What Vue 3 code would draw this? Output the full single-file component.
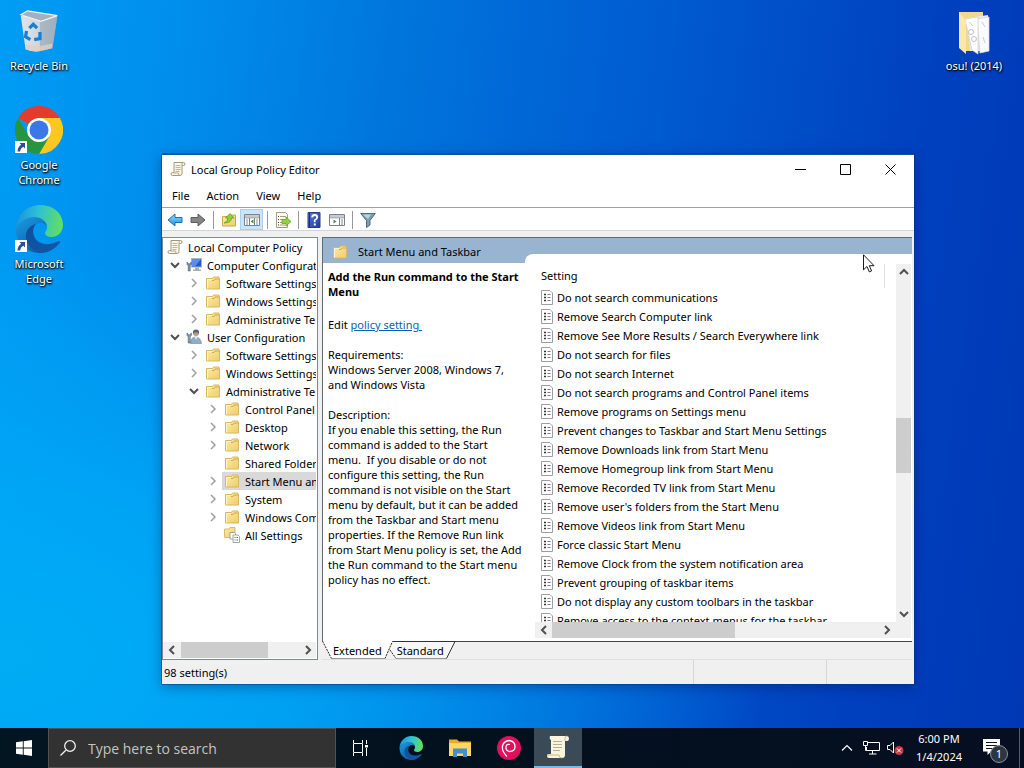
<script setup>
import { ref } from 'vue'

const menus = ['File', 'Action', 'View', 'Help']

const tree = [
  { level: 0, icon: 'scroll', text: 'Local Computer Policy' },
  { level: 1, icon: 'computer', text: 'Computer Configuration', open: true },
  { level: 2, icon: 'folder', text: 'Software Settings', closed: true },
  { level: 2, icon: 'folder', text: 'Windows Settings', closed: true },
  { level: 2, icon: 'folder', text: 'Administrative Templates', closed: true },
  { level: 1, icon: 'user', text: 'User Configuration', open: true },
  { level: 2, icon: 'folder', text: 'Software Settings', closed: true },
  { level: 2, icon: 'folder', text: 'Windows Settings', closed: true },
  { level: 2, icon: 'folder', text: 'Administrative Templates', open: true },
  { level: 3, icon: 'folder', text: 'Control Panel', closed: true },
  { level: 3, icon: 'folder', text: 'Desktop', closed: true },
  { level: 3, icon: 'folder', text: 'Network', closed: true },
  { level: 3, icon: 'folder', text: 'Shared Folders' },
  { level: 3, icon: 'folder', text: 'Start Menu and Taskbar', closed: true, selected: true },
  { level: 3, icon: 'folder', text: 'System', closed: true },
  { level: 3, icon: 'folder', text: 'Windows Components', closed: true },
  { level: 3, icon: 'all', text: 'All Settings' },
]

const description = [
  'If you enable this setting, the Run',
  'command is added to the Start',
  'menu.  If you disable or do not',
  'configure this setting, the Run',
  'command is not visible on the Start',
  'menu by default, but it can be added',
  'from the Taskbar and Start menu',
  'properties. If the Remove Run link',
  'from Start Menu policy is set, the Add',
  'the Run command to the Start menu',
  'policy has no effect.',
].join('\n')

const settings = [
  'Do not search communications',
  'Remove Search Computer link',
  'Remove See More Results / Search Everywhere link',
  'Do not search for files',
  'Do not search Internet',
  'Do not search programs and Control Panel items',
  'Remove programs on Settings menu',
  'Prevent changes to Taskbar and Start Menu Settings',
  'Remove Downloads link from Start Menu',
  'Remove Homegroup link from Start Menu',
  'Remove Recorded TV link from Start Menu',
  "Remove user's folders from the Start Menu",
  'Remove Videos link from Start Menu',
  'Force classic Start Menu',
  'Remove Clock from the system notification area',
  'Prevent grouping of taskbar items',
  'Do not display any custom toolbars in the taskbar',
  'Remove access to the context menus for the taskbar',
]

const query = ref('')
</script>

<template>
  <div class="screen">
    <svg class="defs" width="0" height="0" aria-hidden="true">
      <defs>
        <linearGradient id="gFolder" x1="0" y1="0" x2="1" y2="1">
          <stop offset="0" stop-color="#fdeba6" /><stop offset="1" stop-color="#efcd68" />
        </linearGradient>
        <linearGradient id="gBin" x1="0" y1="0" x2="1" y2="0">
          <stop offset="0" stop-color="#dfe5ea" /><stop offset=".55" stop-color="#ccd5dd" /><stop offset="1" stop-color="#9fb0be" />
        </linearGradient>
        <linearGradient id="gEdgeTop" x1="0" y1=".4" x2="1" y2=".5">
          <stop offset="0" stop-color="#1a93dc" /><stop offset=".45" stop-color="#2fc0d6" /><stop offset="1" stop-color="#62e05c" />
        </linearGradient>
        <linearGradient id="gEdgeMid" x1="0" y1="0" x2=".6" y2="1">
          <stop offset="0" stop-color="#1b9de2" /><stop offset="1" stop-color="#0c5cab" />
        </linearGradient>
        <linearGradient id="gEdgeLow" x1="0" y1="0" x2="1" y2="1">
          <stop offset="0" stop-color="#0e4f9c" /><stop offset="1" stop-color="#1457a6" />
        </linearGradient>
        <linearGradient id="gBlueArrow" x1="0" y1="0" x2="0" y2="1">
          <stop offset="0" stop-color="#8fdcff" /><stop offset="1" stop-color="#1c93dd" />
        </linearGradient>
        <linearGradient id="gHelp" x1="0" y1="0" x2="1" y2="1">
          <stop offset="0" stop-color="#5878d8" /><stop offset="1" stop-color="#22389c" />
        </linearGradient>

        <symbol id="i-folder" viewBox="0 0 16 16">
          <path d="M1.500 3.500h6l1-1.500h5.500v1.500h.5v10.500h-13z" fill="url(#gFolder)" stroke="#d8b662" />
          <path d="M7 5.500h2l1-1.500h4" fill="none" stroke="#cfa84e" />
          <path d="M2 4.500h5M2.500 5v8.500" stroke="#fff4c9" />
        </symbol>
        <symbol id="i-scroll" viewBox="0 0 16 16">
          <path d="M4 1.500h9.500q1.500 0 1.500 1.500t-1.500 1.500h-1.500v8q0 2-2 2h-7.500q-1.500 0-1.500-1.500t1.500-1.500h1.500z" fill="#fbf7e6" stroke="#a5977c" />
          <path d="M12 4.500v-1.500q0-1.500 1.500-1.500M10 14.500q-1.500 0-1.500-2.500h-5" fill="none" stroke="#b6a88a" />
          <path d="M5.500 4.500h5M5.500 6.500h5M5.500 8.500h5M5.500 10.500h4" stroke="#c0b69f" />
        </symbol>
        <symbol id="i-computer" viewBox="0 0 16 16">
          <rect x="5.500" y="1.500" width="10" height="8.500" fill="#2558cc" stroke="#a9b3c4" />
          <path d="M6 2h9l-6 7.500h-3z" fill="#5a8cf0" />
          <path d="M9 10.500h4v2h2v1.500h-8v-1.500h2z" fill="#a5adb8" />
          <path d="M1 5v2.500l1.200 1.200V14h2V8.700L5.400 7.500V5L4.200 6v1H2.200V6z" fill="#7e95a8" stroke="#4d6175" stroke-width=".6" />
        </symbol>
        <symbol id="i-user" viewBox="0 0 16 16">
          <circle cx="10" cy="4" r="3" fill="#b39a80" />
          <path d="M7 4.500q-.5-4 3-4t3 4q-3-2.500-6 0z" fill="#5a6470" />
          <path d="M4.500 14.500q0-6.500 5-6.500t6 6.500z" fill="#8fadc8" stroke="#6f8799" stroke-width=".6" />
          <path d="M8.500 8h3l-1.500 3z" fill="#e2eaf1" />
          <path d="M1 4v2.500l1.200 1.200V14h2V7.700L5.400 6.500V4L4.200 5v1H2.200V5z" fill="#8ba0b2" stroke="#4d6175" stroke-width=".6" />
        </symbol>
        <symbol id="i-all" viewBox="0 0 16 16">
          <path d="M.5 2h4.500l1-1.500h5v10h-10.500z" fill="url(#gFolder)" stroke="#d3ad55" stroke-width=".8" />
          <path d="M6 5.500h4.500l1 1V12H6z" fill="#fff" stroke="#8a8f98" stroke-width=".8" />
          <path d="M9 8h5l1.500 1.500V15.500H9z" fill="#fff" stroke="#8a8f98" stroke-width=".8" />
          <path d="M10.500 10.500h1M12.500 10.500h1.500M10.500 13h1M12.500 13h1.500" stroke="#666" />
        </symbol>
        <symbol id="i-setting" viewBox="0 0 12 15">
          <path d="M.5.5h8.500l2.500 2.500v11.500h-11z" fill="#fff" stroke="#9b9fa5" />
          <path d="M3 4.500h2M3 7.500h2M3 10.500h2" stroke="#333" stroke-width="1.500" />
          <path d="M6.500 4.500h3M6.500 7.500h3M6.500 10.500h3" stroke="#7a7a7a" />
        </symbol>
        <symbol id="i-edge" viewBox="0 0 48 48">
          <path d="M1 23C2 9 13 0 25 0c14 0 23 9 23 20 0 7-5 12-11 12-5 0-7-2-7-4 0-1.500 2-2 2-6 0-5-5-9-12-9C11 13 4 18 1 23z" fill="url(#gEdgeTop)" />
          <path d="M1 23c4-7 10-11 18-11 7 0 12 4 13 9-2-2-4-3-6-3-6 0-9 5-9 10 0 9 7 17 14 19-14 4-31-6-30-24z" fill="url(#gEdgeMid)" />
          <path d="M21 19c-3 3-4 9-1 14 4 7 14 8 24 3 1 0 1.500.5 1 1.500C40 44 33 48 26 48c-9-2-16-10-15-18 0-5 5-10 10-11z" fill="url(#gEdgeLow)" />
        </symbol>
        <symbol id="i-shortcut" viewBox="0 0 12 12">
          <path d="M0 0h12v12H0z" fill="#fff" />
          <path d="M4.500 2H10v5.500L8.300 5.800Q5.500 7 5 10.500H2.500Q2.700 6 6.200 3.800z" fill="#2b4f96" />
        </symbol>
        <symbol id="i-arrow" viewBox="0 0 16 14">
          <path d="M1 7L8 1v3.500h7v5H8V13z" stroke-linejoin="round" />
        </symbol>
      </defs>
    </svg>

    <main class="desktop">
      <nav class="shortcuts" aria-label="Desktop">
        <button class="shortcut" type="button">
          <svg class="big" viewBox="0 -1 50 50">
            <path d="M6 8l5 35q6 3 14 2l14-3 5-34z" fill="url(#gBin)" />
            <path d="M26 13l18-3-5 32-13 3z" fill="#9eafbd" opacity=".75" />
            <path d="M6 7l7-4 31 5-17 6z" fill="#a3b1bc" stroke="#eef3f6" stroke-width="1.200" />
            <path d="M11 38l14 2 14-3-1 5-13 3q-8 1-14-2z" fill="#e0d0c2" opacity=".8" />
            <path d="M15 21l4-4 4 4M12 24l-1 6 5 3M20 33l6-1v-7" fill="none" stroke="#1a7fcd" stroke-width="3.400" />
          </svg>
          <span>Recycle Bin</span>
        </button>
        <button class="shortcut" type="button">
          <svg class="big" viewBox="0 0 48 48">
            <path d="M24 24L3.200 12A24 24 0 0 1 44.800 12z" fill="#e33b2e" />
            <path d="M24 12H44.800A24 24 0 0 1 24 48L34.400 30z" fill="#fcc81f" />
            <path d="M13.600 30L3.200 12A24 24 0 0 0 24 48L34.400 30z" fill="#27953f" />
            <circle cx="24" cy="24" r="12" fill="#fff" /><circle cx="24" cy="24" r="9.500" fill="#3b78e7" />
            <use href="#i-shortcut" x="0" y="35" width="12" height="12" />
          </svg>
          <span>Google<br>Chrome</span>
        </button>
        <button class="shortcut" type="button">
          <svg class="big" viewBox="0 0 48 48">
            <use href="#i-edge" width="48" height="48" />
            <use href="#i-shortcut" x="0" y="35" width="12" height="12" />
          </svg>
          <span>Microsoft<br>Edge</span>
        </button>
      </nav>
      <nav class="shortcuts right" aria-label="Desktop folders">
        <button class="shortcut" type="button">
          <svg class="big" viewBox="0 0 48 48">
            <path d="M9 5h24v39H15l-6-4z" fill="#f2d88b" />
            <path d="M17 11l21-3v36H20z" fill="#e9eaec" />
            <path d="M27 12l12-2v34l-9 2z" fill="#fafafa" stroke="#d2d5d8" stroke-width=".8" />
            <path d="M15 12l13-2v37l-6-4z" fill="#fff" stroke="#cfd2d6" stroke-width=".8" />
            <circle cx="21" cy="25" r="2.500" fill="none" stroke="#bdc3c9" /><circle cx="24" cy="32" r="2.500" fill="none" stroke="#bdc3c9" />
            <path d="M19 15l4 4M32 15l3 5M33 30l2 6" stroke="#c9ced3" />
            <path d="M9 5l7 9v33l-7-6z" fill="#fbe7a6" />
          </svg>
          <span>osu! (2014)</span>
        </button>
      </nav>

      <section class="window" aria-label="Local Group Policy Editor">
        <header class="titlebar">
          <svg class="ic"><use href="#i-scroll" /></svg>
          <h1>Local Group Policy Editor</h1>
          <button type="button" aria-label="Minimize"><svg viewBox="0 0 11 11"><path d="M0 5.500h11" /></svg></button>
          <button type="button" aria-label="Maximize"><svg viewBox="0 0 11 11"><path d="M.5.5h10v10H.5z" /></svg></button>
          <button type="button" aria-label="Close"><svg viewBox="0 0 11 11"><path d="M.5.5l10 10M10.500.5l-10 10" /></svg></button>
        </header>
        <nav class="menubar" aria-label="Menu">
          <button v-for="m in menus" :key="m" type="button">{{ m }}</button>
        </nav>
        <div class="toolbar" role="toolbar" aria-label="Tools">
          <button type="button" aria-label="Back"><svg class="ic"><use href="#i-arrow" fill="url(#gBlueArrow)" stroke="#1d70b4" /></svg></button>
          <button type="button" aria-label="Forward"><svg class="ic flip"><use href="#i-arrow" fill="#858585" stroke="#5c5c5c" /></svg></button>
          <i></i>
          <button type="button" aria-label="Up one level">
            <svg class="ic" viewBox="0 0 16 16"><path d="M1.500 4.500h7l1-1.500h5v11h-13z" fill="url(#gFolder)" stroke="#cda54a" /><path d="M3 11Q7 10 7 6H4.500L9 1.500 13 6h-2.500Q10.500 11 3 11z" fill="#8fd32f" stroke="#56961a" stroke-width=".7" /></svg>
          </button>
          <button type="button" class="on" aria-label="Show console tree">
            <svg class="ic" viewBox="0 0 16 16"><path d="M.5 2.500h15v11H.5z" fill="#fff" stroke="#7a828c" /><path d="M1 4h14M1 5.800h14" stroke="#8d969f" /><path d="M5.500 6v7M10.500 6v7" stroke="#7a828c" /><path d="M2 8h2M2 10h2M2 12h2M12 8h2M12 10h2M12 12h2" stroke="#7f8fa3" /><path d="M9.500 7.500v4l-3-2z" fill="#3b9b2c" /></svg>
          </button>
          <i></i>
          <button type="button" aria-label="Export list">
            <svg class="ic" viewBox="0 0 16 16"><path d="M1.500.5h9l2 2v13h-11z" fill="#fffbe9" stroke="#a39d8c" /><path d="M3 4.500h1M3 7.500h1M3 10.500h1M3 13h1" stroke="#444" /><path d="M5 4.500h6M5 7.500h3M5 10.500h3M5 13h5" stroke="#9a9a9a" /><path d="M7 7.500h4V5l5 4.500L11 14v-2.500H7z" fill="#8ed33b" stroke="#5d9e24" stroke-width=".7" /></svg>
          </button>
          <i></i>
          <button type="button" aria-label="Help">
            <svg class="ic" viewBox="0 0 16 16"><path d="M2 .5h12v15H2z" fill="url(#gHelp)" stroke="#2b3e86" /><path d="M3.500 1v14" stroke="#1b2c78" /><path d="M6.200 5.500Q6.200 3 8.700 3t2.500 2.200Q11.200 7 8.700 8.200v2" fill="none" stroke="#fff" stroke-width="1.800" /><path d="M7.800 11.500h2v2h-2z" fill="#fff" /></svg>
          </button>
          <button type="button" aria-label="Show action pane">
            <svg class="ic" viewBox="0 0 16 16"><path d="M.5 2.500h15v11H.5z" fill="#fff" stroke="#7a828c" /><path d="M1 4h14M1 5.800h14" stroke="#8d969f" /><path d="M10.500 6v7" stroke="#7a828c" /><path d="M12 8h2M12 10h2M12 12h2" stroke="#7f8fa3" /><path d="M4.500 7.500v4l3-2z" fill="#63785e" /></svg>
          </button>
          <i></i>
          <button type="button" aria-label="Filter">
            <svg class="ic" viewBox="0 0 16 16"><path d="M.7 1.500h14.600L10 8.500V13l-3.500 2.500v-7z" fill="#7c9cb2" stroke="#4f6c80" /><path d="M3 2.500h8L8 7z" fill="#bdd2df" /></svg>
          </button>
        </div>

        <div class="panes">
          <aside class="treepane">
            <ul class="tree">
              <li v-for="(n, i) in tree" :key="i" :class="'level' + n.level">
                <span v-if="n.level" class="twisty">
                  <svg v-if="n.open" class="open" viewBox="0 0 10 10"><path d="M1 3l4 4 4-4" /></svg>
                  <svg v-else-if="n.closed" viewBox="0 0 10 10"><path d="M3 1l4 4-4 4" /></svg>
                </span>
                <span class="node" :class="{ selected: n.selected }">
                  <svg class="ic"><use :href="'#i-' + n.icon" /></svg>{{ n.text }}
                </span>
              </li>
            </ul>
            <div class="hscroll">
              <button type="button" aria-label="Scroll left"><svg viewBox="0 0 10 10"><path d="M7 1L3 5l4 4" /></svg></button>
              <div class="track"><b class="treethumb"></b></div>
              <button type="button" aria-label="Scroll right"><svg viewBox="0 0 10 10"><path d="M3 1l4 4-4 4" /></svg></button>
            </div>
          </aside>

          <section class="result">
            <div class="content">
              <h2><svg class="ic"><use href="#i-folder" /></svg>Start Menu and Taskbar</h2>
              <div class="split">
                <article class="info">
                  <h3>Add the Run command to the Start<br>Menu</h3>
                  <p class="edit">Edit <a href="#policy">policy setting </a></p>
                  <p>Requirements:<br>Windows Server 2008, Windows 7,<br>and Windows Vista</p>
                  <p class="desc">Description:<br>{{ description }}</p>
                </article>
                <div class="list">
                  <div class="items">
                    <table>
                      <thead><tr><th scope="col">Setting</th></tr></thead>
                      <tbody>
                        <tr v-for="s in settings" :key="s"><td><div class="cell"><svg class="doc"><use href="#i-setting" /></svg>{{ s }}</div></td></tr>
                      </tbody>
                    </table>
                  </div>
                  <div class="vscroll">
                    <button type="button" aria-label="Scroll up"><svg viewBox="0 0 10 10"><path d="M1 7l4-4 4 4" /></svg></button>
                    <div class="track"><b class="listthumb"></b></div>
                    <button type="button" aria-label="Scroll down"><svg viewBox="0 0 10 10"><path d="M1 3l4 4 4-4" /></svg></button>
                  </div>
                  <div class="hscroll">
                    <button type="button" aria-label="Scroll list left"><svg viewBox="0 0 10 10"><path d="M7 1L3 5l4 4" /></svg></button>
                    <div class="track"><b class="widethumb"></b></div>
                    <button type="button" aria-label="Scroll list right"><svg viewBox="0 0 10 10"><path d="M3 1l4 4-4 4" /></svg></button>
                  </div>
                </div>
              </div>
            </div>
            <div class="tabs">
              <div class="tabset">
                <svg viewBox="0 0 134 19" aria-hidden="true">
                  <path d="M66 .5H133L124.500 17.500H74L68 9z" fill="#f7f7f7" />
                  <path d="M0 0l9.500 17.500H63L70 0z" fill="#fff" />
                  <path d="M.5 0l9 17.500M63 17.500L70.500.5M68 9l6 8.500" fill="none" stroke="#222" stroke-dasharray="2 1" />
                  <path d="M9.500 17.500H63M74 17.500H124.500" stroke="#999" />
                  <path d="M70.500.5H134M133 .5L124.500 17.500" fill="none" stroke="#333" />
                </svg>
                <button type="button">Extended</button>
                <button type="button">Standard</button>
              </div>
              <span class="rest"></span>
            </div>
          </section>
        </div>
        <footer class="status"><span>98 setting(s)</span><span></span><span></span></footer>
      </section>

      <svg class="cursor" viewBox="0 0 12 19" aria-hidden="true"><path d="M.5.800v15l3.500-3.300 2.300 5.400 2.300-1-2.300-5.200h4.700z" fill="#fff" stroke="#000" stroke-width=".9" /></svg>
    </main>

    <footer class="taskbar">
      <button type="button" class="start" aria-label="Start">
        <svg width="16" height="16" viewBox="0 0 16 16"><path d="M0 2.300l6.800-1v6.200H0zM7.700 1.200L16 0v7.500H7.700zM0 8.500h6.800v6.200L0 13.700zM7.700 8.500H16V16l-8.300-1.200z" fill="#fff" /></svg>
      </button>
      <label class="search">
        <svg width="16" height="16" viewBox="0 0 16 16"><path d="M5.800 10.200L.5 15.500" /><circle cx="10" cy="6" r="5.300" /></svg>
        <input v-model="query" type="text" placeholder="Type here to search" aria-label="Type here to search">
      </label>
      <div class="apps">
        <button type="button" class="view" aria-label="Task view">
          <svg width="17" height="16" viewBox="0 0 17 16" fill="none" stroke="#fff"><path d="M1.500 0v3.500h9V0M1.500 16v-3.500h9V16M1.500 4v8M10.500 4v8M14.500 0v4M14.500 8v8" /><path d="M13 5h3v2.500h-3z" fill="#fff" stroke="none" /></svg>
        </button>
        <button type="button" aria-label="Microsoft Edge"><svg width="24" height="24"><use href="#i-edge" /></svg></button>
        <button type="button" aria-label="File Explorer">
          <svg width="22" height="20" viewBox="0 0 22 20"><path d="M0 1.500h8l2 2h12V18H0z" fill="#e9a92c" /><path d="M0 5h22v13H0z" fill="#fcd667" /><path d="M4 10.500h14V19h-4v-3.500H8V19H4z" fill="#4390c8" /></svg>
        </button>
        <button type="button" aria-label="Open-Shell">
          <svg width="24" height="24" viewBox="0 0 24 24"><circle cx="12" cy="12" r="12" fill="#e0105a" /><path d="M10 20.500Q4.500 15 5.500 10T12.500 4.500Q18 5.500 18 10.500T12.500 15.500Q8.500 14.500 9 11T13 8.500" fill="none" stroke="#fff" stroke-width="1.300" /></svg>
        </button>
        <button type="button" class="active" aria-label="Local Group Policy Editor">
          <svg width="22" height="24" viewBox="0 0 22 24"><path d="M3 1h17q2 0 2 2.500T20 6h-2v14q0 3-3 3H2q-2 0-2-2t2-2h2V5Q2 4 3 1z" fill="#fbf4dc" /><path d="M18 6V3q0-2 2-2M0 20h12q0 3 3 3" fill="none" stroke="#c9b88e" /><path d="M6 6.500h9M6 9.500h9M6 12.500h9M6 15.500h7" stroke="#b8ad93" /></svg>
        </button>
      </div>
      <div class="tray">
        <button type="button" class="up" aria-label="Show hidden icons"><svg width="12" height="8" viewBox="0 0 12 8"><path d="M1 6.500l5-5 5 5" fill="none" stroke="#fff" stroke-width="1.200" /></svg></button>
        <button type="button" class="net" aria-label="Network"><svg width="17" height="14" viewBox="0 0 17 14" fill="none" stroke="#fff"><path d="M5 1.500h11.500v8H3.500V6M9.500 9.500v3.500M6 13h7.500M.5.500h4v4h-4zM2.500 4.500v5h1" /></svg></button>
        <button type="button" class="vol" aria-label="Volume muted"><svg width="17" height="16" viewBox="0 0 17 16"><path d="M.5 5.500h2.500L6.500 2v11L3 9.500H.5z" fill="none" stroke="#fff" /><circle cx="12" cy="10.500" r="4.500" fill="#c8373f" /><path d="M10 8.500l4 4M14 8.500l-4 4" stroke="#fff" /></svg></button>
        <time datetime="2024-01-04T18:00">6:00 PM<br>1/4/2024</time>
        <button type="button" class="notes" aria-label="Notifications">
          <svg width="26" height="26" viewBox="0 0 26 26"><path d="M1 4h17v12.500H9L5.500 20v-3.500H1z" fill="#fff" /><path d="M4 7.500h11M4 10.500h11M4 13.500h7" stroke="#0a1626" /></svg>
          <span>1</span>
        </button>
        <button type="button" class="peek" aria-label="Show desktop"></button>
      </div>
    </footer>
  </div>
</template>

<style>
html, body { margin: 0; overflow: hidden; }
</style>

<style scoped>
* { box-sizing: border-box; }
.screen { min-height: 100vh; display: grid; grid-template-rows: 1fr 40px; font-family: "Noto Sans", "Open Sans", sans-serif; font-size: 11px; line-height: 15px; color: #000; }
button { font: inherit; color: inherit; background: none; border: 0; padding: 0; margin: 0; }
.defs { position: absolute; }
.ic { width: 16px; height: 16px; flex: none; }
.desktop { position: relative; display: flex; justify-content: space-between; align-items: flex-start;
  background: radial-gradient(ellipse 75% 55% at 0% 90%, #00acf4 0%, rgba(0, 170, 248, .8) 40%, rgba(0, 150, 240, 0) 100%), linear-gradient(98deg, #009df4 0%, #008ceb 18%, #0075dc 36%, #005ad0 60%, #0040be 84%, #0038b4 100%); }
.shortcuts { position: relative; width: 78px; padding-top: 7px; display: grid; grid-auto-rows: 99px; }
.shortcuts.right { width: 100px; }
.shortcut { display: flex; flex-direction: column; align-items: center; gap: 3px; color: #fff; text-shadow: 1px 1px 2px #000, 0 1px 2px #000; }
.big { width: 48px; height: 48px; }

.window { position: absolute; left: 162px; top: 154px; right: 110px; bottom: 44px; display: flex; flex-direction: column; background: #f0f0f0; border-top: 1px solid #10559a; box-shadow: 0 0 0 1px rgba(0, 50, 110, .45), 0 3px 12px rgba(0, 20, 80, .4); }
.titlebar { height: 30px; display: flex; align-items: center; background: #fff; padding: 0 1px 2px 8px; }
.titlebar h1 { flex: 1; margin: 0 0 0 5px; font-size: 11px; font-weight: 400; }
.titlebar button { width: 45px; height: 28px; display: grid; place-items: center; }
.titlebar button svg { width: 11px; height: 11px; fill: none; stroke: #000; }
.menubar { height: 22px; display: flex; gap: 17px; padding: 0 0 2px 10px; background: #fff; }
.toolbar { height: 24px; display: flex; align-items: center; padding: 1px 0 0 1px; background: #fff; border-top: 1px solid #a0a0a0; border-bottom: 1px solid #d5d5d5; }
.toolbar button { width: 23px; height: 21px; display: grid; place-items: center; }
.toolbar .on { background: #cce4f7; border: 1px solid #a9d0f0; }
.toolbar i { width: 1px; height: 18px; margin: 0 3px 0 4px; background: #999; }
.flip { transform: scaleX(-1); }

.panes { flex: 1; min-height: 0; display: flex; gap: 4px; padding: 6px 2px 0 0; }
.treepane { width: 156px; flex: none; display: flex; flex-direction: column; background: #fff; border: 1px solid #828790; padding: 0 1px 1px 0; }
.tree { flex: 1; min-height: 0; overflow: hidden; list-style: none; margin: 0; padding: 0; }
.tree li { display: flex; height: 18px; }
.level0 { padding-left: 2px; }
.level1 { padding-left: 3px; }
.level2 { padding-left: 22px; }
.level3 { padding-left: 41px; }
.twisty { width: 18px; padding-right: 1px; flex: none; display: grid; place-items: center; }
.twisty svg, .hscroll svg, .vscroll svg { width: 10px; height: 10px; fill: none; stroke: #a0a0a0; stroke-width: 1.5; }
.twisty .open, .hscroll svg, .vscroll svg { stroke: #505050; stroke-width: 2; }
.node { flex: 1; min-width: 0; display: flex; align-items: center; gap: 5px; padding-left: 2px; white-space: nowrap; overflow: hidden; }
.node.selected { background: #d9d9d9; }
.hscroll { display: flex; height: 16px; background: #f0f0f0; }
.vscroll { display: flex; flex-direction: column; background: #f0f0f0; }
.hscroll button, .vscroll button { width: 17px; height: 16px; flex: none; display: grid; place-items: center; }
.vscroll button { width: 15px; }
.track { flex: 1; display: flex; }
.vscroll .track { flex-direction: column; }
.track b { background: #cdcdcd; }
.treethumb { width: 73%; margin-left: 1px; }
.widethumb { width: 56%; }
.listthumb { height: 17%; margin-top: 138px; }

.result { flex: 1; min-width: 0; display: flex; flex-direction: column; }
.content { flex: 1; min-height: 0; display: flex; flex-direction: column; background: #fff; border: solid #646a74; border-width: 1px 0 0 1px; }
.content h2 { height: 25px; flex: none; margin: 0; padding: 2px 0 0 9px; display: flex; align-items: center; gap: 10px; background: #99b4d1; font-size: 11px; font-weight: 400; }
.split { flex: 1; min-height: 0; display: flex; }
.info { width: 202px; flex: none; padding: 6px 0 0 5px; white-space: nowrap; }
.info h3 { margin: 0 0 18px; font-size: 11px; line-height: 15px; font-weight: 700; }
.info p { margin: 0 0 15px; }
.info .desc { white-space: pre; }
.info a { color: #0563b8; text-decoration: underline; white-space: pre; }
.list { flex: 1; min-width: 0; margin-top: -9px; padding: 10px 1px 3px 10px; border-top-left-radius: 8px; background: #fff; display: grid; grid-template: minmax(0, 1fr) 16px / minmax(0, 1fr) 15px; }
.items { overflow: hidden; padding-left: 6px; }
.list .vscroll { grid-row: 1; grid-column: 2; }
.list .hscroll { grid-row: 2; grid-column: 1 / 3; padding-right: 16px; }
table { border-collapse: collapse; width: calc(100% - 11px); }
th { height: 24px; padding: 0 0 1px; text-align: left; font-weight: 400; border-right: 1px solid #e0e0e0; }
td { padding: 0; }
.cell { display: flex; align-items: center; gap: 4px; height: 19px; white-space: nowrap; }
.doc { width: 12px; height: 15px; flex: none; }
.tabs { display: flex; height: 19px; flex: none; border-bottom: 1px solid #dfdfdf; }
.tabset { position: relative; width: 134px; display: flex; padding: 1px 0 0 11px; gap: 15px; }
.tabset svg { position: absolute; left: 0; top: 0; width: 134px; height: 19px; }
.tabset button { position: relative; height: 17px; }
.rest { flex: 1; border-top: 1px solid #444; }
.status { height: 24px; flex: none; display: grid; grid-template-columns: 1fr 133px 88px; padding-left: 2px; }
.status span { padding-top: 5px; }
.status span + span { border-left: 1px solid #d7d7d7; }
.cursor { position: absolute; left: 863px; top: 254px; width: 12px; height: 19px; }

.taskbar { display: flex; background: linear-gradient(90deg, #021621, #03101d 50%, #060f22); color: #fff; }
.taskbar button { display: grid; place-items: center; }
.start { width: 48px; }
.search { width: 288px; display: flex; align-items: center; gap: 12px; padding-left: 11px; background: #323232; border: 1px solid #525252; }
.search svg { fill: none; stroke: #f0f0f0; stroke-width: 1.300; }
.search input { flex: 1; min-width: 0; padding: 2px 0 0; border: 0; outline: 0; background: none; color: #fff; font: 14px/20px "Open Sans", sans-serif; }
.search input::placeholder { color: #c4c4c4; opacity: 1; }
.apps { display: flex; gap: 1px; }
.apps button { width: 48px; height: 40px; }
.apps .view { margin-right: 2px; }
.apps .active { background: #3b4a57; border-bottom: 2px solid #76b9ed; }
.tray { margin-left: auto; display: flex; align-items: stretch; }
.up { width: 24px; }
.net { width: 24px; }
.vol { width: 24px; }
.tray time { width: 64px; text-align: center; line-height: 18px; padding-top: 2px; }
.notes { position: relative; width: 48px; }
.notes span { position: absolute; left: 19px; top: 17px; width: 18px; height: 18px; border: 1px solid #8a929c; border-radius: 50%; background: #2c3540; line-height: 16px; }
.taskbar .peek { width: 5px; border-left: 1px solid #56606c; }
</style>
